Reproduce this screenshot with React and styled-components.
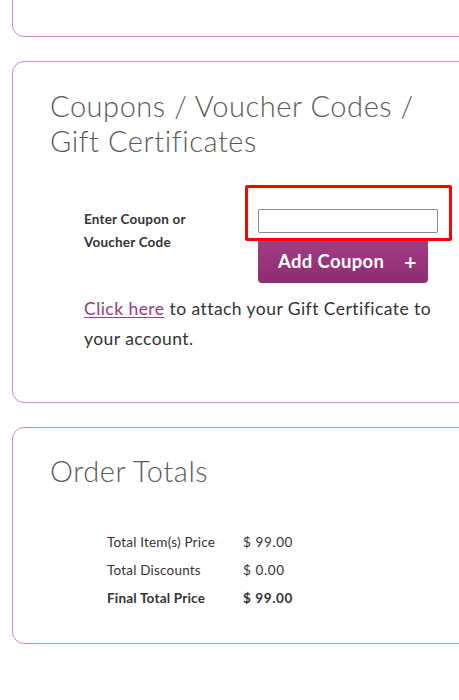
import React from "react";
import styled, { createGlobalStyle } from "styled-components";

const Global = createGlobalStyle`
  html, body { margin: 0; padding: 0; background: #fff; overflow: hidden; }
  body { font-family: "Lato", "Open Sans", sans-serif; color: #333; }
`;

const Page = styled.div`
  padding-left: 12px;
  width: 480px;
  display: flex;
  flex-direction: column;
  gap: 24px;
`;

const Card = styled.section`
  border: 1px solid #d986d2;
  border-radius: 12px;
  background: #fff;
  padding: ${(p) => p.$pad || "26px 38px 48px 37px"};
  height: ${(p) => p.$h || "auto"};
  margin-top: ${(p) => p.$mt || "0"};
  box-sizing: border-box;
`;

const Heading = styled.h2`
  margin: 0;
  font-family: "Lato", sans-serif;
  font-weight: 300;
  font-size: 29px;
  letter-spacing: 0.55px;
  line-height: 35px;
  color: #5a5a5a;
  width: 390px;
`;

const FormRow = styled.div`
  display: flex;
  margin-top: 27px;
  padding-left: 34px;
`;

const Label = styled.label`
  width: 161px;
  padding-top: 23px;
  font-size: 13.5px;
  letter-spacing: 0.2px;
  font-weight: 700;
  line-height: 23px;
  color: #333;
`;

const FieldCol = styled.div`
  display: flex;
  flex-direction: column;
`;

const Highlight = styled.div`
  width: 207px;
  height: 56px;
  box-sizing: border-box;
  border: 3px solid #ff0000;
  border-radius: 2px;
  padding: 21px 0 0 10px;
`;

const Input = styled.input`
  display: block;
  width: 180px;
  height: 24px;
  box-sizing: border-box;
  border: 1px solid #8a8a8a;
  border-radius: 2px;
  margin: 0;
  padding: 2px 4px;
  background: #fff;
`;

const Button = styled.button`
  margin-left: 13px;
  width: 170px;
  height: 42px;
  border: none;
  border-radius: 0 0 4px 4px;
  background: linear-gradient(#a23d84, #8d2c71);
  color: #fff;
  font-family: "Lato", sans-serif;
  font-weight: 700;
  font-size: 18.5px;
  letter-spacing: 0.35px;
  display: flex;
  align-items: center;
  justify-content: flex-start;
  gap: 20px;
  padding: 0 0 2px 20px;
  cursor: pointer;
`;

const Plus = styled.span`
  font-size: 21px;
  font-weight: 700;
`;

const Para = styled.p`
  margin: 11px 0 0 34px;
  width: 370px;
  font-size: 17.5px;
  letter-spacing: 0.45px;
  line-height: 30px;
  color: #333;
`;

const Link = styled.a`
  color: #9a3a80;
  text-decoration: underline;
  text-underline-offset: 2px;
`;

const Table = styled.div`
  margin: 40px 0 0 57px;
  display: grid;
  grid-template-columns: 136px auto;
  font-size: 13.5px;
  letter-spacing: 0.2px;
  line-height: 28px;
  color: #333;
`;

const Cell = styled.div`
  font-weight: ${(p) => (p.$bold ? 700 : 400)};
  letter-spacing: ${(p) => (p.$num ? "0.6px" : "inherit")};
`;

const rows = [
  ["Total Item(s) Price", "$ 99.00", false],
  ["Total Discounts", "$ 0.00", false],
  ["Final Total Price", "$ 99.00", true],
];

export default function App() {
  return (
    <>
      <Global />
      <Page>
        <Card $h="100px" $mt="-63px" $pad="0" />
        <Card>
          <Heading>Coupons / Voucher Codes / Gift Certificates</Heading>
          <FormRow>
            <Label htmlFor="coupon">
              Enter Coupon or
              <br />
              Voucher Code
            </Label>
            <FieldCol>
              <Highlight>
                <Input id="coupon" type="text" />
              </Highlight>
              <Button type="button">
                <span>Add Coupon</span>
                <Plus>+</Plus>
              </Button>
            </FieldCol>
          </FormRow>
          <Para>
            <Link href="#">Click here</Link> to attach your Gift Certificate to
            your account.
          </Para>
        </Card>
        <Card $pad="25px 38px 31px 37px">
          <Heading>Order Totals</Heading>
          <Table>
            {rows.map(([k, v, b]) => (
              <React.Fragment key={k}>
                <Cell $bold={b}>{k}</Cell>
                <Cell $bold={b} $num>
                  {v}
                </Cell>
              </React.Fragment>
            ))}
          </Table>
        </Card>
      </Page>
    </>
  );
}
